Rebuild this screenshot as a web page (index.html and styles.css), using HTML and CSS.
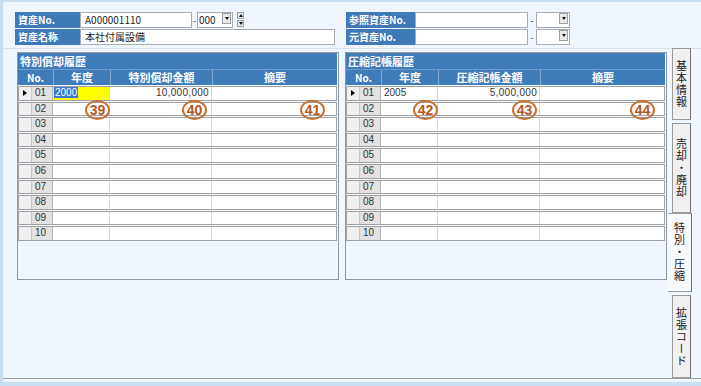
FILE: index.html
```html
<!DOCTYPE html>
<html lang="ja">
<head>
<meta charset="utf-8">
<title>特別・圧縮</title>
<link rel="stylesheet" href="styles.css">
</head>
<body>
<div class="window">
  <div class="top">
    <div class="fgroup fleft">
      <div class="frow">
        <span class="lbl">資産No.</span>
        <span class="inp w112">A000001110</span>
        <span class="dash">-</span>
        <span class="inp combo c36">000<span class="ddbtn"><i class="down"></i></span></span>
        <span class="spin"><span class="sb"><i class="up"></i></span><span class="sb"><i class="down"></i></span></span>
      </div>
      <div class="frow">
        <span class="lbl">資産名称</span>
        <span class="inp w255">本社付属設備</span>
      </div>
    </div>
    <div class="fgroup fright">
      <div class="frow">
        <span class="lbl l69">参照資産No.</span>
        <span class="inp w113"></span>
        <span class="dash d8">-</span>
        <span class="inp combo c34"><span class="ddbtn"><i class="down"></i></span></span>
      </div>
      <div class="frow">
        <span class="lbl l69">元資産No.</span>
        <span class="inp w113"></span>
        <span class="dash d8">-</span>
        <span class="inp combo c34"><span class="ddbtn"><i class="down"></i></span></span>
      </div>
    </div>
  </div>

  <div class="body">
    <div class="content">
      <div class="grid">
        <div class="gtitle">特別償却履歴</div>
        <div class="ghead"><span>No.</span><span>年度</span><span>特別償却金額</span><span>摘要</span></div>
        <div class="rows">
          <div class="row"><span class="ind"><i class="cur"></i></span><span class="no">01</span><span class="c yellow"><span class="sel">2000</span></span><span class="c amt">10,000,000</span><span class="c"></span></div>
          <div class="row"><span class="ind"></span><span class="no">02</span><span class="c"></span><span class="c"></span><span class="c"></span></div>
          <div class="row"><span class="ind"></span><span class="no">03</span><span class="c"></span><span class="c"></span><span class="c"></span></div>
          <div class="row"><span class="ind"></span><span class="no">04</span><span class="c"></span><span class="c"></span><span class="c"></span></div>
          <div class="row"><span class="ind"></span><span class="no">05</span><span class="c"></span><span class="c"></span><span class="c"></span></div>
          <div class="row"><span class="ind"></span><span class="no">06</span><span class="c"></span><span class="c"></span><span class="c"></span></div>
          <div class="row"><span class="ind"></span><span class="no">07</span><span class="c"></span><span class="c"></span><span class="c"></span></div>
          <div class="row"><span class="ind"></span><span class="no">08</span><span class="c"></span><span class="c"></span><span class="c"></span></div>
          <div class="row"><span class="ind"></span><span class="no">09</span><span class="c"></span><span class="c"></span><span class="c"></span></div>
          <div class="row"><span class="ind"></span><span class="no">10</span><span class="c"></span><span class="c"></span><span class="c"></span></div>
        </div>
      </div>
      <div class="grid">
        <div class="gtitle">圧縮記帳履歴</div>
        <div class="ghead"><span>No.</span><span>年度</span><span>圧縮記帳金額</span><span>摘要</span></div>
        <div class="rows">
          <div class="row"><span class="ind"><i class="cur"></i></span><span class="no">01</span><span class="c">2005</span><span class="c amt">5,000,000</span><span class="c"></span></div>
          <div class="row"><span class="ind"></span><span class="no">02</span><span class="c"></span><span class="c"></span><span class="c"></span></div>
          <div class="row"><span class="ind"></span><span class="no">03</span><span class="c"></span><span class="c"></span><span class="c"></span></div>
          <div class="row"><span class="ind"></span><span class="no">04</span><span class="c"></span><span class="c"></span><span class="c"></span></div>
          <div class="row"><span class="ind"></span><span class="no">05</span><span class="c"></span><span class="c"></span><span class="c"></span></div>
          <div class="row"><span class="ind"></span><span class="no">06</span><span class="c"></span><span class="c"></span><span class="c"></span></div>
          <div class="row"><span class="ind"></span><span class="no">07</span><span class="c"></span><span class="c"></span><span class="c"></span></div>
          <div class="row"><span class="ind"></span><span class="no">08</span><span class="c"></span><span class="c"></span><span class="c"></span></div>
          <div class="row"><span class="ind"></span><span class="no">09</span><span class="c"></span><span class="c"></span><span class="c"></span></div>
          <div class="row"><span class="ind"></span><span class="no">10</span><span class="c"></span><span class="c"></span><span class="c"></span></div>
        </div>
      </div>
    </div>
    <div class="tabs">
      <div class="tab t1"><span>基本情報</span></div>
      <div class="tab t2"><span>売却・廃却</span></div>
      <div class="tab active t3"><span>特別・圧縮</span></div>
      <div class="tab t4"><span>拡張コード</span></div>
    </div>
  </div>
  <div class="footer"></div>

  <span class="mark m39">39</span>
  <span class="mark m40">40</span>
  <span class="mark m41">41</span>
  <span class="mark m42">42</span>
  <span class="mark m43">43</span>
  <span class="mark m44">44</span>
</div>
</body>
</html>
```

FILE: styles.css
```css
html, body {
  margin: 0;
  padding: 0;
}
body {
  width: 701px;
  height: 386px;
  overflow: hidden;
  background: #EFF6FD;
  font-family: "Noto Sans CJK JP", "Noto Sans", sans-serif;
  color: #222;
}
.window {
  position: relative;
  width: 701px;
  height: 386px;
  box-sizing: border-box;
  border-left: 3px solid #C9DEF1;
  border-top: 2px solid #C9DEF1;
  background: #EFF6FD;
  display: flex;
  flex-direction: column;
}

/* ---------- top fields ---------- */
.top {
  height: 47px;
  box-sizing: border-box;
  padding: 10px 0 0 12px;
  border-bottom: 1px solid #D3DFEA;
  display: flex;
  gap: 11px;
  flex-shrink: 0;
}
.fgroup { display: flex; flex-direction: column; gap: 1px; }
.fleft { width: 320px; }
.frow { display: flex; height: 16px; align-items: stretch; }
.lbl {
  width: 65px;
  background: #3D7AB7;
  color: #fff;
  font-weight: bold;
  font-size: 10px;
  line-height: 16px;
  padding-left: 3px;
  box-sizing: border-box;
  white-space: nowrap;
}
.l69 { width: 69px; }
.inp {
  background: #fff;
  border: 1px solid #A7ABB2;
  box-sizing: border-box;
  font-size: 10px;
  line-height: 14px;
  padding-left: 4px;
  color: #222;
  white-space: nowrap;
}
.w112 { width: 112px; }
.w113 { width: 113px; }
.w255 { width: 255px; }
.dash {
  width: 5px;
  font-size: 10px;
  line-height: 15px;
  color: #555;
  text-align: center;
}
.d8 { width: 8px; }
.combo {
  display: flex;
  justify-content: space-between;
  align-items: flex-start;
  padding-left: 1px;
  padding-right: 1px;
}
.c36 { width: 36px; }
.c34 { width: 34px; }
.ddbtn {
  width: 9px;
  height: 11px;
  box-sizing: border-box;
  background: #E9E9E9;
  border: 1px solid #A0A0A0;
  display: flex;
  align-items: center;
  justify-content: center;
  margin-left: auto;
}
.down {
  display: block;
  width: 0;
  height: 0;
  border-left: 2.5px solid transparent;
  border-right: 2.5px solid transparent;
  border-top: 3px solid #111;
}
.up {
  display: block;
  width: 0;
  height: 0;
  border-left: 2.5px solid transparent;
  border-right: 2.5px solid transparent;
  border-bottom: 3px solid #111;
}
.spin {
  display: flex;
  flex-direction: column;
  margin-left: 4px;
  width: 7px;
  gap: 1px;
}
.sb {
  height: 7px;
  box-sizing: border-box;
  border: 1px solid #A0A0A0;
  background: #E9E9E9;
  display: flex;
  align-items: center;
  justify-content: center;
}

/* ---------- body ---------- */
.body {
  height: 330px;
  box-sizing: border-box;
  border-bottom: 1px solid #9AA0A6;
  display: flex;
  flex-shrink: 0;
}
.content {
  width: 665px;
  box-sizing: border-box;
  padding: 3px 0 0 14px;
  display: flex;
  gap: 6px;
  align-items: flex-start;
}
.grid {
  width: 322px;
  height: 228px;
  box-sizing: border-box;
  border: 1px solid #8E9AA3;
  background: #EFF6FD;
}
.gtitle {
  height: 16px;
  margin-right: 1px;
  background: #3F7DBA;
  color: #fff;
  font-weight: bold;
  font-size: 11px;
  line-height: 16px;
  padding-left: 2px;
}
.ghead {
  height: 16px;
  margin-right: 1px;
  box-sizing: border-box;
  border-top: 1px solid #6C9ACA;
  background: #3F7DBA;
  display: grid;
  grid-template-columns: 35px 57px 102px 1fr;
}
.ghead span {
  color: #fff;
  font-weight: bold;
  font-size: 11px;
  line-height: 15px;
  text-align: center;
  border-left: 1px solid #86ABD3;
}
.ghead span:first-child { border-left: none; font-size: 10px; }
.rows {
  margin-top: 1px;
  margin-right: 1px;
  display: flex;
  flex-direction: column;
  gap: 1px;
}
.row {
  height: 14.6px;
  box-sizing: border-box;
  border: 1px solid #A2A2A2;
  background: #fff;
  display: grid;
  grid-template-columns: 12px 22px 57px 102px 1fr;
  font-family: "Liberation Sans", Arial, sans-serif;
  font-size: 10px;
  line-height: 12px;
  color: #333;
}
.ind {
  background: #EFEFEF;
  display: flex;
  align-items: center;
  justify-content: center;
}
.no {
  background: #E2E2E2;
  border-left: 1px solid #C8C8C8;
  border-right: 1px solid #B4B4B4;
  padding-left: 3px;
  box-sizing: border-box;
}
.c {
  border-right: 1px solid #D8D8D8;
  padding-left: 3px;
  white-space: nowrap;
}
.c:last-child { border-right: none; }
.amt {
  text-align: right;
  padding-right: 2px;
  letter-spacing: 0.3px;
}
.yellow {
  background: #FFFF00;
  padding-left: 1px;
}
.sel {
  background: #3A78D8;
  color: #fff;
  padding: 0 1px;
}
.cur {
  display: block;
  width: 0;
  height: 0;
  border-top: 3.5px solid transparent;
  border-bottom: 3.5px solid transparent;
  border-left: 4px solid #000;
}

/* ---------- tabs ---------- */
.tabs {
  width: 24px;
  display: flex;
  flex-direction: column;
}
.tab {
  box-sizing: border-box;
  background: #F0F0F0;
  border: 1px solid #9A9A9A;
  border-right: 1px solid #6E6E6E;
  margin-left: 4px;
  width: 19px;
  display: flex;
  align-items: center;
  justify-content: center;
}
.tab span {
  writing-mode: vertical-rl;
  font-size: 11px;
  letter-spacing: 1px;
  color: #222;
  line-height: 14px;
}
.t1 { height: 72px; margin-top: -1px; }
.t2 { height: 90px; margin-top: 3px; }
.t3 { height: 80px; }
.t4 { height: 83px; margin-top: 3px; }
.tab.active {
  margin-left: 0;
  width: 24px;
  background: #F8F9FA;
  border-left: none;
}

/* ---------- footer ---------- */
.footer {
  height: 7px;
  box-sizing: border-box;
  padding-top: 3px;
  border-bottom: 4px solid #C8DEF1;
}

/* ---------- annotation marks ---------- */
.mark {
  position: absolute;
  width: 25px;
  height: 20px;
  box-sizing: border-box;
  border: 2px solid #C8702E;
  border-radius: 50%;
  color: #B9581C;
  font-family: "Liberation Sans", Arial, sans-serif;
  font-weight: bold;
  font-size: 14px;
  line-height: 16px;
  text-align: center;
  background: transparent;
}
.m39 { left: 82px; top: 98px; }
.m40 { left: 179px; top: 98px; }
.m41 { left: 297px; top: 98px; }
.m42 { left: 410px; top: 98px; }
.m43 { left: 509px; top: 98px; }
.m44 { left: 627px; top: 98px; }
```
